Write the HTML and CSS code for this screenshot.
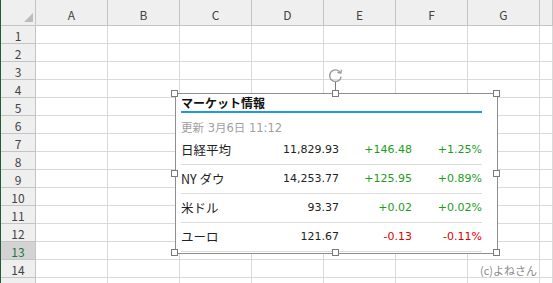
FILE: index.html
```html
<!DOCTYPE html>
<html lang="ja">
<head>
  <meta charset="UTF-8" />
  <title>マーケット情報</title>
  <link rel="stylesheet" href="styles.css">
</head>
<body>
  <div class="sheet" id="sheet"></div>

  <div class="widget">
    <div class="title">マーケット情報</div>
    <div class="updated">更新 3月6日 11:12</div>
    <div class="quote">
      <span class="name">日経平均</span>
      <span class="num">11,829.93</span>
      <span class="num up">+146.48</span>
      <span class="num up">+1.25%</span>
    </div>
    <div class="quote">
      <span class="name">NY ダウ</span>
      <span class="num">14,253.77</span>
      <span class="num up">+125.95</span>
      <span class="num up">+0.89%</span>
    </div>
    <div class="quote">
      <span class="name">米ドル</span>
      <span class="num">93.37</span>
      <span class="num up">+0.02</span>
      <span class="num up">+0.02%</span>
    </div>
    <div class="quote">
      <span class="name">ユーロ</span>
      <span class="num">121.67</span>
      <span class="num down">-0.13</span>
      <span class="num down">-0.11%</span>
    </div>

    <div class="rotate-line"></div>
    <svg class="rotate" width="15" height="15" viewBox="0 0 15 15">
      <path d="M12.4 4.6 A5.8 5.8 0 1 0 13.2 8.6" fill="none" stroke="#9a9a9a" stroke-width="1.4" />
      <path d="M9.4 4.3 L12.8 5.2 L13.4 1.6" fill="none" stroke="#9a9a9a" stroke-width="1.3" />
    </svg>
    <div class="handle h-tl"></div>
    <div class="handle h-tc"></div>
    <div class="handle h-tr"></div>
    <div class="handle h-ml"></div>
    <div class="handle h-mr"></div>
    <div class="handle h-bl"></div>
    <div class="handle h-bc"></div>
    <div class="handle h-br"></div>
  </div>

  <script>
    const sheet = document.getElementById('sheet');
    const cols = ['A', 'B', 'C', 'D', 'E', 'F', 'G', ''];

    function cell(cls, text) {
      const el = document.createElement('div');
      el.className = cls;
      if (text) el.textContent = text;
      sheet.appendChild(el);
      return el;
    }

    cell('hd corner').appendChild(document.createElement('span'));
    cols.forEach(c => cell('hd col', c));

    // row 15 only peeks in at the bottom edge, so no label
    for (let r = 1; r <= 15; r++) {
      cell(r === 13 ? 'hd row selected' : 'hd row', r < 15 ? String(r) : '');
      cols.forEach((c, i) => {
        const td = cell('cell');
        if (r === 14 && i === 6) {
          td.classList.add('credit');
          td.textContent = '(c)よねさん';
        }
      });
    }
  </script>
</body>
</html>
```

FILE: styles.css
```css
body {
  margin: 0;
  width: 553px;
  height: 283px;
  overflow: hidden;
  background: #fff;
  font-family: 'Noto Sans CJK JP', 'Noto Sans', sans-serif;
  color: #222;
}

/* spreadsheet grid */
.sheet {
  display: grid;
  grid-template-columns: 35px repeat(7, 72px) 1fr;
  grid-template-rows: 26px;
  grid-auto-rows: 18px;
  border-left: 1px solid #1f5c3a;
}
.cell, .hd {
  box-sizing: border-box;
  border-right: 1px solid #dadada;
  border-bottom: 1px solid #dadada;
}
.hd {
  background: #efefef;
  border-color: #c4c4c4;
  color: #444;
  font-size: 12px;
  display: flex;
  align-items: center;
  justify-content: center;
}
.col {
  padding-top: 4px;
}
.row {
  padding-top: 2px;
}
.row.selected {
  background: #d3d3d3;
  color: #217346;
}
.corner {
  align-items: flex-end;
  justify-content: flex-end;
  padding: 0 2px 3px 0;
}
.corner span {
  width: 0;
  height: 0;
  border-left: 9px solid transparent;
  border-bottom: 9px solid #bcbcbc;
}
.credit {
  font-size: 11px;
  color: #8a8a8a;
  text-align: right;
  padding: 2px 2px 0 0;
  line-height: 16px;
  white-space: nowrap;
}

/* floating shape */
.widget {
  position: absolute;
  left: 175px;
  top: 93px;
  width: 323px;
  height: 161px;
  box-sizing: border-box;
  border: 1px solid #8e8e8e;
  background: #fff;
  padding: 0 15px 1px 5px;
  font-size: 12px;
}
.title {
  font-weight: bold;
  height: 17px;
  line-height: 17px;
  border-bottom: 2px solid #1e9bd7;
  color: #111;
}
.updated {
  height: 23px;
  box-sizing: border-box;
  padding-top: 8px;
  line-height: 15px;
  color: #a0a0a0;
  font-family: 'DejaVu Sans', 'Noto Sans CJK JP', sans-serif;
  font-size: 11.5px;
}
.quote {
  display: grid;
  grid-template-columns: 80px 78px 73px 70px;
  align-items: center;
  height: 29px;
  box-sizing: border-box;
  border-bottom: 1px solid #dcdcdc;
  line-height: 16px;
}
.name {
  font-size: 12.5px;
}
.num {
  text-align: right;
  font-family: 'DejaVu Sans', sans-serif;
  font-size: 11px;
}
.up {
  color: #1a9e1a;
}
.down {
  color: #e00000;
}

/* selection handles */
.handle {
  position: absolute;
  width: 7px;
  height: 7px;
  box-sizing: border-box;
  border: 1px solid #7a7a7a;
  background: #fff;
}
.h-tl { left: -5px; top: -4px; }
.h-tc { left: 156px; top: -4px; }
.h-tr { left: 317px; top: -4px; }
.h-ml { left: -5px; top: 76px; }
.h-mr { left: 317px; top: 76px; }
.h-bl { left: -5px; top: 155px; }
.h-bc { left: 156px; top: 155px; }
.h-br { left: 317px; top: 155px; }
.rotate-line {
  position: absolute;
  left: 159px;
  top: -12px;
  width: 1px;
  height: 8px;
  background: #7a7a7a;
}
.rotate {
  position: absolute;
  left: 152px;
  top: -26px;
}
```
